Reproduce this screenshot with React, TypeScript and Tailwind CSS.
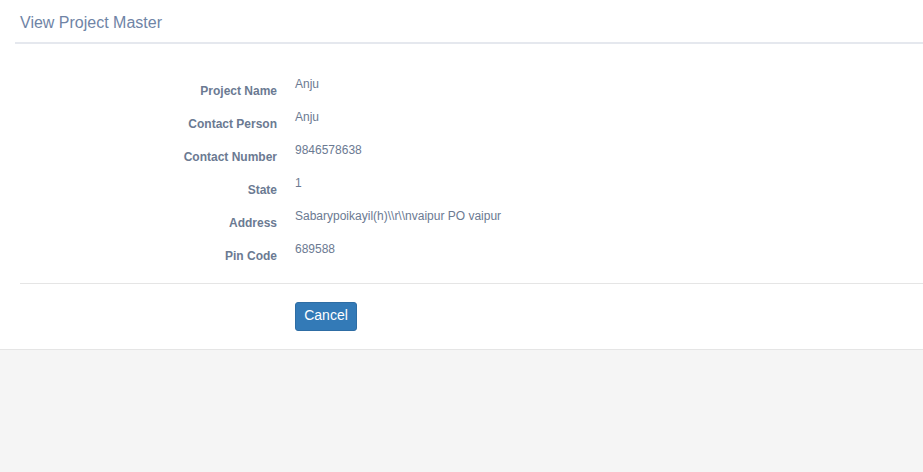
const project = [
  { label: 'Project Name', value: 'Anju' },
  { label: 'Contact Person', value: 'Anju' },
  { label: 'Contact Number', value: '9846578638' },
  { label: 'State', value: '1' },
  { label: 'Address', value: 'Sabarypoikayil(h)\\\\r\\\\nvaipur PO vaipur' },
  { label: 'Pin Code', value: '689588' },
];

export default function App() {
  return (
    <div className="min-h-[472px] bg-[#f5f5f5] font-['Liberation_Sans',Arial,sans-serif]">
      <div className="bg-white border-b border-[#e5e5e5] h-[350px]">
        <div className="ml-[15px] border-b-2 border-[#e5e8ee] h-[44px] pl-[5px] pt-[12px]">
          <h1 className="text-[16px] leading-[22px] text-[#6f84a6]">View Project Master</h1>
        </div>
        <div className="pt-[32px] pl-[20px]">
          {project.map((row) => (
            <div key={row.label} className="flex h-[33px]">
              <div className="w-[257px] text-right pt-[7px] text-[12px] leading-[17px] font-bold text-[#6b7a92]">
                {row.label}
              </div>
              <div className="pl-[18px] text-[12px] leading-[17px] text-[#6b7a92]">{row.value}</div>
            </div>
          ))}
          <div className="border-t border-[#e5e5e5] mt-[9px] pt-[18px] pl-[275px]">
            <button className="w-[62px] h-[29px] pb-[3px] rounded-[3px] bg-[#337ab7] border border-[#2e6da4] text-white text-[14px] leading-[20px]">
              Cancel
            </button>
          </div>
        </div>
      </div>
    </div>
  );
}
